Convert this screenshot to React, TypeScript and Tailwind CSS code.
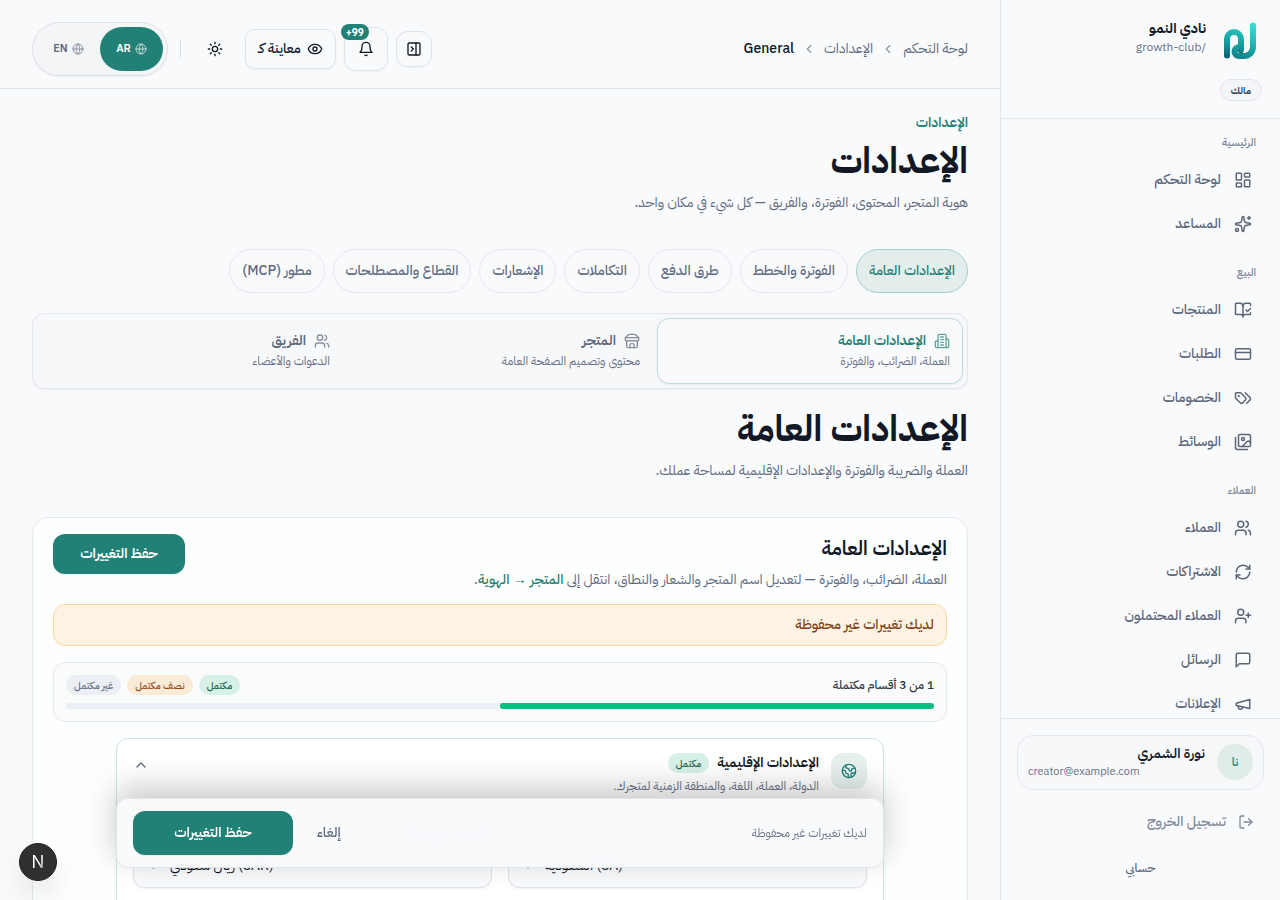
import type { ReactNode } from "react";
import {
  BookOpenCheck,
  ChevronDown,
  ChevronLeft,
  ChevronUp,
  CreditCard,
  Earth,
  Eye,
  Globe,
  LayoutDashboard,
  LogOut,
  PanelRightClose,
  RefreshCw,
  Sparkles,
  Sun,
  UserPlus,
  Users,
} from "lucide-react";
import clsx from "clsx";

interface IconProps {
  className?: string;
}

const Stroke = ({ className, children }: IconProps & { children: ReactNode }) => (
  <svg
    viewBox="0 0 24 24"
    fill="none"
    stroke="currentColor"
    strokeWidth="2"
    strokeLinecap="round"
    strokeLinejoin="round"
    className={className}
    aria-hidden="true"
  >
    {children}
  </svg>
);

const TagsIcon = ({ className }: IconProps) => (
  <Stroke className={className}>
    <path d="m15 5 6.3 6.3a2.4 2.4 0 0 1 0 3.4L17 19" />
    <path d="M9.586 5.586A2 2 0 0 0 8.172 5H3a1 1 0 0 0-1 1v5.172a2 2 0 0 0 .586 1.414L8.29 18.29a2.426 2.426 0 0 0 3.42 0l3.58-3.58a2.426 2.426 0 0 0 0-3.42z" />
    <circle cx="6.5" cy="9.5" r=".5" fill="currentColor" />
  </Stroke>
);

const ImagesIcon = ({ className }: IconProps) => (
  <Stroke className={className}>
    <path d="M18 22H4a2 2 0 0 1-2-2V6" />
    <path d="m22 13-1.296-1.296a2.41 2.41 0 0 0-3.408 0L11 18" />
    <circle cx="12" cy="8" r="2" />
    <rect width="16" height="16" x="6" y="2" rx="2" />
  </Stroke>
);

const MessageIcon = ({ className }: IconProps) => (
  <Stroke className={className}>
    <path d="M21 15a2 2 0 0 1-2 2H7l-4 4V5a2 2 0 0 1 2-2h14a2 2 0 0 1 2 2z" />
  </Stroke>
);

const MegaphoneIcon = ({ className }: IconProps) => (
  <Stroke className={className}>
    <path d="m3 11 18-5v12L3 14v-3z" />
    <path d="M11.6 16.8a3 3 0 1 1-5.8-1.6" />
  </Stroke>
);

const BellIcon = ({ className }: IconProps) => (
  <Stroke className={className}>
    <path d="M6 8a6 6 0 0 1 12 0c0 7 3 9 3 9H3s3-2 3-9" />
    <path d="M10.3 21a1.94 1.94 0 0 0 3.4 0" />
  </Stroke>
);

const BuildingIcon = ({ className }: IconProps) => (
  <Stroke className={className}>
    <path d="M6 22V4a2 2 0 0 1 2-2h8a2 2 0 0 1 2 2v18Z" />
    <path d="M6 12H4a2 2 0 0 0-2 2v6a2 2 0 0 0 2 2h2" />
    <path d="M18 9h2a2 2 0 0 1 2 2v9a2 2 0 0 1-2 2h-2" />
    <path d="M10 6h4M10 10h4M10 14h4M10 18h4" />
  </Stroke>
);

const StoreIcon = ({ className }: IconProps) => (
  <Stroke className={className}>
    <path d="m2 7 4.41-4.41A2 2 0 0 1 7.83 2h8.34a2 2 0 0 1 1.42.59L22 7" />
    <path d="M4 12v8a2 2 0 0 0 2 2h12a2 2 0 0 0 2-2v-8" />
    <path d="M15 22v-4a2 2 0 0 0-2-2h-2a2 2 0 0 0-2 2v4" />
    <path d="M2 7h20" />
    <path d="M22 7v3a2 2 0 0 1-2 2a2.7 2.7 0 0 1-1.59-.63.7.7 0 0 0-.82 0A2.7 2.7 0 0 1 16 12a2.7 2.7 0 0 1-1.59-.63.7.7 0 0 0-.82 0A2.7 2.7 0 0 1 12 12a2.7 2.7 0 0 1-1.59-.63.7.7 0 0 0-.82 0A2.7 2.7 0 0 1 8 12a2.7 2.7 0 0 1-1.59-.63.7.7 0 0 0-.82 0A2.7 2.7 0 0 1 4 12a2 2 0 0 1-2-2V7" />
  </Stroke>
);

const Logo = () => (
  <svg viewBox="0 0 44 44" fill="none" className="size-11 shrink-0 rounded-xl bg-[#f8f9f9]" aria-hidden="true">
    <defs>
      <linearGradient id="arch" gradientUnits="userSpaceOnUse" x1="12" y1="39" x2="18" y2="12">
        <stop offset="0" stopColor="#0d5f70" />
        <stop offset="0.5" stopColor="#169a9c" />
        <stop offset="1" stopColor="#22bdb6" />
      </linearGradient>
      <linearGradient id="hook" gradientUnits="userSpaceOnUse" x1="22" y1="40" x2="34" y2="6">
        <stop offset="0" stopColor="#10808a" />
        <stop offset="0.5" stopColor="#1fb5b0" />
        <stop offset="1" stopColor="#2fe0d2" />
      </linearGradient>
    </defs>
    <path
      d="M35 6.500V28a9 9 0 0 1-9 9h-4.500c-3 0-5-2-5-4.500 0-3 2.500-4.500 5.500-4.500"
      stroke="url(#hook)"
      strokeWidth="6"
      strokeLinecap="round"
    />
    <path d="M9 36.500V20a7 7 0 0 1 14 0v11" stroke="url(#arch)" strokeWidth="6" strokeLinecap="round" />
    <path d="M20 31c0 2 2 3 5 3" stroke="#0b5566" />
  </svg>
);

const navGroups = [
  {
    title: "الرئيسية",
    items: [
      { label: "لوحة التحكم", Icon: LayoutDashboard },
      { label: "المساعد", Icon: Sparkles },
    ],
  },
  {
    title: "البيع",
    items: [
      { label: "المنتجات", Icon: BookOpenCheck },
      { label: "الطلبات", Icon: CreditCard },
      { label: "الخصومات", Icon: TagsIcon },
      { label: "الوسائط", Icon: ImagesIcon },
    ],
  },
  {
    title: "العملاء",
    items: [
      { label: "العملاء", Icon: Users },
      { label: "الاشتراكات", Icon: RefreshCw },
      { label: "العملاء المحتملون", Icon: UserPlus },
      { label: "الرسائل", Icon: MessageIcon },
      { label: "الإعلانات", Icon: MegaphoneIcon },
    ],
  },
];

const tabs = [
  "الإعدادات العامة",
  "الفوترة والخطط",
  "طرق الدفع",
  "التكاملات",
  "الإشعارات",
  "القطاع والمصطلحات",
  "مطور (MCP)",
];

const areas = [
  { title: "الإعدادات العامة", text: "العملة، الضرائب، والفوترة", Icon: BuildingIcon },
  { title: "المتجر", text: "محتوى وتصميم الصفحة العامة", Icon: StoreIcon },
  { title: "الفريق", text: "الدعوات والأعضاء", Icon: Users },
];

const Sidebar = () => (
  <aside className="flex h-full w-[280px] shrink-0 flex-col border-l border-[#e3e6ee]">
    <div className="border-b border-[#e5e8ee] px-[18px] pt-[19px] pb-[17px]">
      <div className="flex items-start gap-3">
        <Logo />
        <div>
          <p className="text-sm leading-5 font-bold text-[#121826]">نادي النمو</p>
          <p className="text-xs leading-4 text-[#667085]">/growth-club</p>
        </div>
      </div>
      <span className="mt-4 inline-flex h-[22px] items-center rounded-full border border-[#e2e5ec] bg-[#f4f5f8] px-2.5 align-top text-[10px] font-semibold text-[#303848]">
        مالك
      </span>
    </div>

    <nav className="flex min-h-0 flex-1 flex-col gap-[19px] overflow-y-auto px-4 pt-4 [scrollbar-width:none]">
      {navGroups.map((group) => (
        <div key={group.title}>
          <h3 className="mb-[7px] px-2 text-[11px] leading-4 font-medium text-[#788294]">{group.title}</h3>
          {group.items.map(({ label, Icon }) => (
            <a
              key={label}
              href="#"
              className="flex h-11 items-center gap-[13px] rounded-xl px-3 text-sm font-medium text-[#5b6679]"
            >
              <Icon className="size-[18px]" />
              {label}
            </a>
          ))}
        </div>
      ))}
    </nav>

    <div className="border-t border-[#e3e6ee] px-4 pt-4 pb-2.5">
      <div className="flex items-center gap-3 rounded-2xl border border-[#e4e7ec] bg-[#f7f8fa] px-2.5 pt-2 pb-[9px]">
        <span className="flex size-9 shrink-0 items-center justify-center rounded-full bg-[#dfecea] text-xs font-semibold text-[#2e8b80]">
          نا
        </span>
        <div className="min-w-0 flex-1">
          <p className="text-sm leading-5 font-semibold text-[#121826]">نورة الشمري</p>
          <p dir="ltr" className="truncate text-left text-[11px] leading-4 text-[#667085]">
            creator@example.com
          </p>
        </div>
      </div>
      <button
        type="button"
        className="mt-2.5 flex h-11 w-full items-center gap-3 px-2.5 text-sm font-medium text-[#7f8999]"
      >
        <LogOut className="size-4" />
        تسجيل الخروج
      </button>
      <a href="#" className="mt-0.5 flex h-11 items-center justify-center text-xs font-medium text-[#5b6679]">
        حسابي
      </a>
    </div>
  </aside>
);

const Topbar = () => (
  <header className="flex shrink-0 items-center justify-between border-b border-[#dce2ea] px-8 pt-[22px] pb-3">
    <nav className="flex items-center gap-2 text-sm text-[#5f6b80]">
      <a href="#">لوحة التحكم</a>
      <ChevronLeft className="size-3.5 opacity-70" />
      <a href="#">الإعدادات</a>
      <ChevronLeft className="size-3.5 opacity-70" />
      <span className="font-medium text-[#121826]">General</span>
    </nav>

    <div className="flex items-center gap-2 text-[#121826]">
      <button
        type="button"
        aria-label="الشريط الجانبي"
        className="flex size-9 items-center justify-center rounded-xl border border-[#dfe3ea] shadow-xs"
      >
        <PanelRightClose className="size-4" />
      </button>
      <button
        type="button"
        aria-label="التنبيهات"
        className="relative flex size-11 items-center justify-center rounded-xl border border-[#dfe3ea] shadow-xs"
      >
        <BellIcon className="size-4" />
        <span className="absolute -top-1 -left-1 flex h-4 min-w-7 items-center justify-center rounded-full bg-[#228176] text-[10px] font-bold text-white">
          99+
        </span>
      </button>
      <button
        type="button"
        className="flex h-10 items-center gap-1.5 rounded-[10px] border border-[#dfe3ea] px-3 text-sm font-medium shadow-xs"
      >
        <Eye className="size-4" />
        معاينة كـ
      </button>
      <button type="button" aria-label="المظهر" className="flex size-11 items-center justify-center">
        <Sun className="size-4" />
      </button>
      <div className="mx-1 h-5 w-px bg-[#d8dfe8]" />
      <div className="flex rounded-full border border-[#dfe2e9] bg-[#f4f5f7] p-1 text-[11px] font-semibold shadow-xs">
        <button
          type="button"
          className="flex h-11 w-[63px] items-center justify-center gap-1 rounded-full bg-[#228176] text-white"
        >
          <Globe className="size-3 opacity-70" />
          AR
        </button>
        <button
          type="button"
          className="flex h-11 w-[63px] items-center justify-center gap-1 rounded-full text-[#5f6b80]"
        >
          <Globe className="size-3 opacity-70" />
          EN
        </button>
      </div>
    </div>
  </header>
);

const badgeTones = {
  done: "bg-[#d7f1e8] text-[#17634c]",
  half: "bg-[#f9ebd6] text-[#8f4a1c]",
  none: "bg-[#eceff3] text-[#667085]",
};

const Badge = ({ tone, children }: { tone: keyof typeof badgeTones; children: ReactNode }) => (
  <span className={clsx("flex h-5 items-center rounded-full px-2 text-[10px] font-medium", badgeTones[tone])}>
    {children}
  </span>
);

const SelectField = ({ id, label, value }: { id: string; label: string; value: string }) => (
  <div>
    <label htmlFor={id} className="mb-2 block text-sm leading-5 font-medium">
      {label}
    </label>
    <div dir="ltr" className="relative">
      <select
        id={id}
        className="h-11 w-full appearance-none rounded-xl border border-[#dce1e8] bg-[#f9fafc] pr-3 pl-9 text-sm text-[#121826] shadow-xs"
      >
        <option>{value}</option>
      </select>
      <ChevronDown className="pointer-events-none absolute top-3.5 left-3 size-4 text-[#5f6b80]" />
    </div>
  </div>
);

const SaveBar = () => (
  <div className="sticky bottom-0 mx-auto flex w-full max-w-3xl items-center justify-between rounded-xl border border-[#e0e5ec] bg-[#f9fafc]/95 px-4 py-3 shadow-[0_-10px_32px_rgba(0,0,0,0.22)] backdrop-blur-md">
    <p className="text-xs leading-4 text-[#6b7688]">لديك تغييرات غير محفوظة</p>
    <div className="flex items-center gap-2">
      <button type="button" className="h-11 px-4 text-sm font-medium text-[#5f6b80]">
        إلغاء
      </button>
      <button type="submit" className="h-11 w-40 rounded-xl bg-[#228176] text-sm font-semibold text-white shadow-xs">
        حفظ التغييرات
      </button>
    </div>
  </div>
);

const GeneralForm = () => (
  <form className="mt-[34px] rounded-2xl border border-[#e4e7ee] bg-[#fdfefe] px-5 py-4">
    <div className="flex items-start justify-between">
      <div>
        <h3 className="text-xl leading-7 font-semibold text-[#121826]">الإعدادات العامة</h3>
        <p className="mt-1.5 text-sm leading-[22px] text-[#5f6b80]">
          العملة، الضرائب، والفوترة — لتعديل اسم المتجر والشعار والنطاق، انتقل إلى{" "}
          <a href="#" className="font-medium text-[#228176]">
            المتجر <span className="font-['Liberation_Sans',sans-serif] font-normal">→</span> الهوية
          </a>
          .
        </p>
      </div>
      <button
        type="submit"
        className="h-10 w-[132px] rounded-xl bg-[#228176] text-sm font-semibold text-white shadow-xs"
      >
        حفظ التغييرات
      </button>
    </div>

    <p className="mt-[13px] rounded-xl border border-[#f9d999] bg-[#fcf3e4] px-3 py-2.5 text-sm leading-5 font-medium text-[#7f3f14]">
      لديك تغييرات غير محفوظة
    </p>

    <div className="mt-4 rounded-xl border border-[#e6e8ef] bg-[#fafbfb] p-3">
      <div className="flex items-center justify-between">
        <p className="text-xs font-medium text-[#2c3342]">1 من 3 أقسام مكتملة</p>
        <div className="flex gap-1.5">
          <Badge tone="done">مكتمل</Badge>
          <Badge tone="half">نصف مكتمل</Badge>
          <Badge tone="none">غير مكتمل</Badge>
        </div>
      </div>
      <div className="mt-2 h-1.5 rounded-full bg-[#eceff3]">
        <div className="h-full w-1/2 rounded-full bg-[#12b981]" />
      </div>
    </div>

    <section className="mx-auto mt-4 w-full max-w-3xl rounded-xl border border-[#cfe4e1] bg-white shadow-xs">
      <div className="flex items-start gap-3 px-4 py-3.5">
        <span className="flex size-9 shrink-0 items-center justify-center rounded-xl bg-[#e6f1ef] text-[#228176]">
          <Earth className="size-4" />
        </span>
        <div className="flex-1">
          <div className="flex items-center gap-2">
            <h4 className="text-sm leading-5 font-semibold text-[#121826]">الإعدادات الإقليمية</h4>
            <Badge tone="done">مكتمل</Badge>
          </div>
          <p className="mt-1 text-xs leading-[18px] text-[#667085]">
            الدولة، العملة، اللغة، والمنطقة الزمنية لمتجرك.
          </p>
        </div>
        <button type="button" aria-label="طي القسم" className="mt-1 text-[#5f6b80]">
          <ChevronUp className="size-4" />
        </button>
      </div>
      <div className="grid grid-cols-2 gap-4 px-4 pt-[7px] pb-24">
        <SelectField id="country" label="الدولة" value="السعودية (SA)" />
        <SelectField id="currency" label="العملة الافتراضية" value="ريال سعودي (SAR)" />
      </div>
    </section>

    <SaveBar />
  </form>
);

export default function App() {
  return (
    <div
      dir="rtl"
      className="flex h-screen overflow-hidden bg-[#f9fafc] font-['IBM_Plex_Sans_Arabic','Noto_Sans',sans-serif] text-[#121826]"
    >
      <Sidebar />
      <div className="flex min-w-0 flex-1 flex-col">
        <Topbar />
        <main className="min-h-0 flex-1 overflow-y-auto px-8 pt-6 pb-8 [scrollbar-width:none]">
          <p className="text-sm leading-5 font-semibold text-[#228176]">الإعدادات</p>
          <h1 className="mt-1 text-4xl leading-[48px] font-bold">الإعدادات</h1>
          <p className="mt-1.5 text-sm leading-6 text-[#5f6b80]">
            هوية المتجر، المحتوى، الفوترة، والفريق — كل شيء في مكان واحد.
          </p>

          <div className="mt-[34px] flex gap-2">
            {tabs.map((tab, i) => (
              <button
                key={tab}
                type="button"
                className={clsx(
                  "h-11 rounded-full border px-3 text-sm font-medium whitespace-nowrap",
                  i === 0 ? "border-[#a3cfc9] bg-[#e3eeec] text-[#228176]" : "border-[#e7e9ee] text-[#5f6b80]",
                )}
              >
                {tab}
              </button>
            ))}
          </div>

          <div className="mt-5 grid grid-cols-3 gap-1 rounded-xl border border-[#e3e6ed] bg-[#f7f8fa] p-1 shadow-xs">
            {areas.map(({ title, text, Icon }, i) => (
              <a
                key={title}
                href="#"
                className={clsx(
                  "rounded-xl border px-3 pt-3 pb-3.5",
                  i === 0 ? "border-[#bcdcd8] bg-[#f9fafc] shadow-xs" : "border-transparent",
                )}
              >
                <span
                  className={clsx(
                    "flex items-center gap-2 text-sm leading-5 font-semibold",
                    i === 0 ? "text-[#228176]" : "text-[#5b6679]",
                  )}
                >
                  <Icon className="size-4 opacity-70" />
                  {title}
                </span>
                <span className="mt-0.5 block text-xs leading-4 text-[#667085]">{text}</span>
              </a>
            ))}
          </div>

          <h2 className="mt-4 text-4xl leading-[48px] font-bold">الإعدادات العامة</h2>
          <p className="mt-1.5 text-sm leading-6 text-[#5f6b80]">
            العملة والضريبة والفوترة والإعدادات الإقليمية لمساحة عملك.
          </p>

          <GeneralForm />
        </main>
      </div>

      <button
        type="button"
        aria-label="Next.js"
        className="fixed bottom-[19px] left-[19px] flex size-[38px] items-center justify-center rounded-full border border-[#1f1f1f] bg-[#303030] shadow-[0_16px_32px_-8px_rgba(0,0,0,0.24)]"
      >
        <span className="bg-linear-to-br from-white from-60% to-[#777] bg-clip-text font-['Inter',sans-serif] text-[17px] leading-5 text-transparent">
          N
        </span>
      </button>
    </div>
  );
}
